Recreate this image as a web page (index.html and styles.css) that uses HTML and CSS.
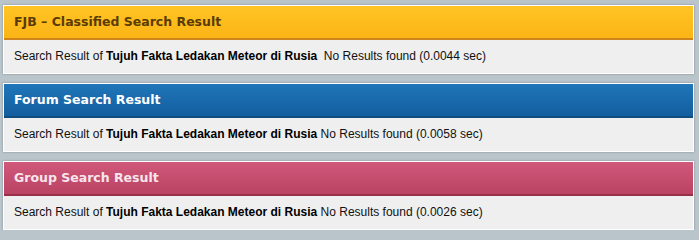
FILE: index.html
```html
<!DOCTYPE html>
<html>
<head>
<meta charset="utf-8">
<link rel="stylesheet" href="styles.css">
</head>
<body>
<div class="page">
  <section class="panel panel-fjb">
    <h2 class="head">FJB – Classified Search Result</h2>
    <div class="body">Search Result of <b>Tujuh Fakta Ledakan Meteor di Rusia</b>&nbsp; No Results found (0.0044 sec)</div>
  </section>
  <section class="panel panel-forum">
    <h2 class="head">Forum Search Result</h2>
    <div class="body">Search Result of <b>Tujuh Fakta Ledakan Meteor di Rusia</b> No Results found (0.0058 sec)</div>
  </section>
  <section class="panel panel-group">
    <h2 class="head">Group Search Result</h2>
    <div class="body">Search Result of <b>Tujuh Fakta Ledakan Meteor di Rusia</b> No Results found (0.0026 sec)</div>
  </section>
</div>
</body>
</html>
```

FILE: styles.css
```css
html, body {
  margin: 0;
  padding: 0;
  background: #b9c4cb;
}
.page {
  padding: 5px 5px 0 3px;
  display: flex;
  flex-direction: column;
  gap: 9px;
}
.panel {
  border: 1px solid #ffffff;
  box-shadow: 0 0 2px rgba(60, 70, 80, 0.45);
  background: #efefef;
}
.head {
  margin: 0;
  height: 32px;
  line-height: 32px;
  padding-left: 10px;
  font-family: "DejaVu Sans", Verdana, sans-serif;
  font-weight: bold;
  font-size: 12.5px;
  border-bottom: 2px solid;
}
.panel-fjb .head {
  background: linear-gradient(#ffc524, #fbb415);
  color: #5b3b05;
  border-bottom-color: #cf851b;
}
.panel-forum .head {
  background: linear-gradient(#1f76b9, #135e9e);
  color: #ffffff;
  border-bottom-color: #0f4c7f;
}
.panel-group .head {
  background: linear-gradient(#d0597b, #ba4263);
  color: #f6e6ec;
  border-bottom-color: #983048;
}
.body {
  height: 33px;
  line-height: 33px;
  padding-left: 10px;
  font-family: "Liberation Sans", Arial, sans-serif;
  font-size: 12px;
  color: #111111;
}
.body b {
  color: #000000;
}
```
